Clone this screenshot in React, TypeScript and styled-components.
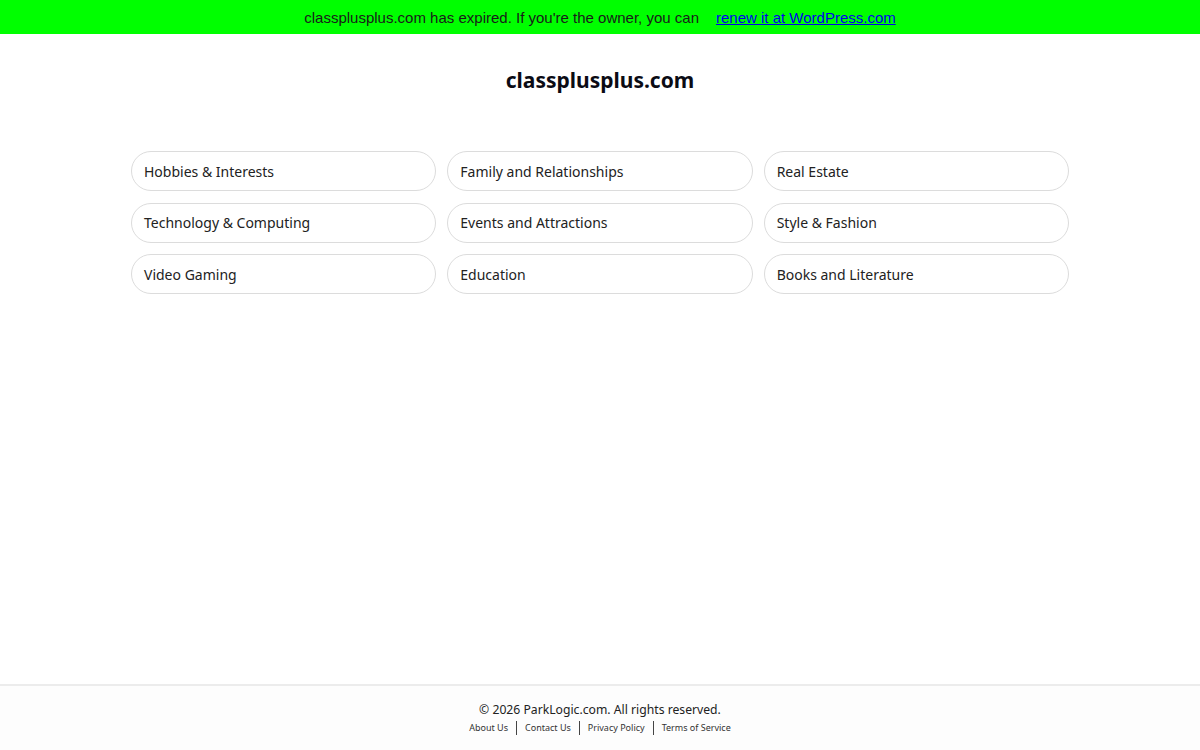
import styled, { createGlobalStyle } from 'styled-components';

const GlobalStyle = createGlobalStyle`
  html, body {
    margin: 0;
    padding: 0;
    background: #ffffff;
  }
  * {
    box-sizing: border-box;
  }
`;

const categories = [
  'Hobbies & Interests',
  'Family and Relationships',
  'Real Estate',
  'Technology & Computing',
  'Events and Attractions',
  'Style & Fashion',
  'Video Gaming',
  'Education',
  'Books and Literature',
];

const footerLinks = ['About Us', 'Contact Us', 'Privacy Policy', 'Terms of Service'];

const Page = styled.div`
  min-height: 100vh;
  display: flex;
  flex-direction: column;
  font-family: 'Noto Sans', 'Open Sans', sans-serif;
  color: #111;
`;

const Banner = styled.div`
  height: 34px;
  background: #00ff00;
  display: flex;
  align-items: center;
  justify-content: center;
  gap: 17px;
  font-family: 'Liberation Sans', Arial, sans-serif;
  font-size: 15px;
  color: #1a1a1a;
`;

const BannerLink = styled.a`
  color: #0000ee;
  text-decoration: underline;
`;

const Main = styled.main`
  flex: 1;
  display: flex;
  flex-direction: column;
  align-items: center;
`;

const Title = styled.h1`
  margin: 32px 0 0;
  font-size: 21px;
  font-weight: 700;
  line-height: 28px;
  color: #0b0b14;
`;

const Grid = styled.div`
  margin-top: 57px;
  width: 938px;
  display: grid;
  grid-template-columns: repeat(3, 1fr);
  column-gap: 11px;
  row-gap: 11.5px;
`;

const Pill = styled.a`
  height: 40px;
  display: flex;
  align-items: center;
  padding: 0 12px;
  border: 1px solid #dcdcdc;
  border-radius: 20px;
  font-size: 14px;
  color: #222;
  text-decoration: none;
  background: #fff;
`;

const Footer = styled.footer`
  height: 66px;
  border-top: 2px solid #ececec;
  background: #fdfdfd;
  display: flex;
  flex-direction: column;
  align-items: center;
  padding-top: 15px;
`;

const Copyright = styled.div`
  font-size: 12.2px;
  line-height: 18px;
  color: #222;
`;

const LinkRow = styled.div`
  display: flex;
  align-items: center;
  margin-top: 2px;
`;

const FooterLink = styled.a<{ $first?: boolean }>`
  font-size: 9px;
  line-height: 14px;
  color: #333;
  text-decoration: none;
  padding: 0 8px;
  border-left: ${(p) => (p.$first ? 'none' : '1px solid #444')};
`;

export default function App() {
  return (
    <Page>
      <GlobalStyle />
      <Banner>
        <span>classplusplus.com has expired. If you're the owner, you can</span>
        <BannerLink href="#">renew it at WordPress.com</BannerLink>
      </Banner>
      <Main>
        <Title>classplusplus.com</Title>
        <Grid>
          {categories.map((c) => (
            <Pill key={c} href="#">
              {c}
            </Pill>
          ))}
        </Grid>
      </Main>
      <Footer>
        <Copyright>© 2026 ParkLogic.com. All rights reserved.</Copyright>
        <LinkRow>
          {footerLinks.map((l, i) => (
            <FooterLink key={l} href="#" $first={i === 0}>
              {l}
            </FooterLink>
          ))}
        </LinkRow>
      </Footer>
    </Page>
  );
}
